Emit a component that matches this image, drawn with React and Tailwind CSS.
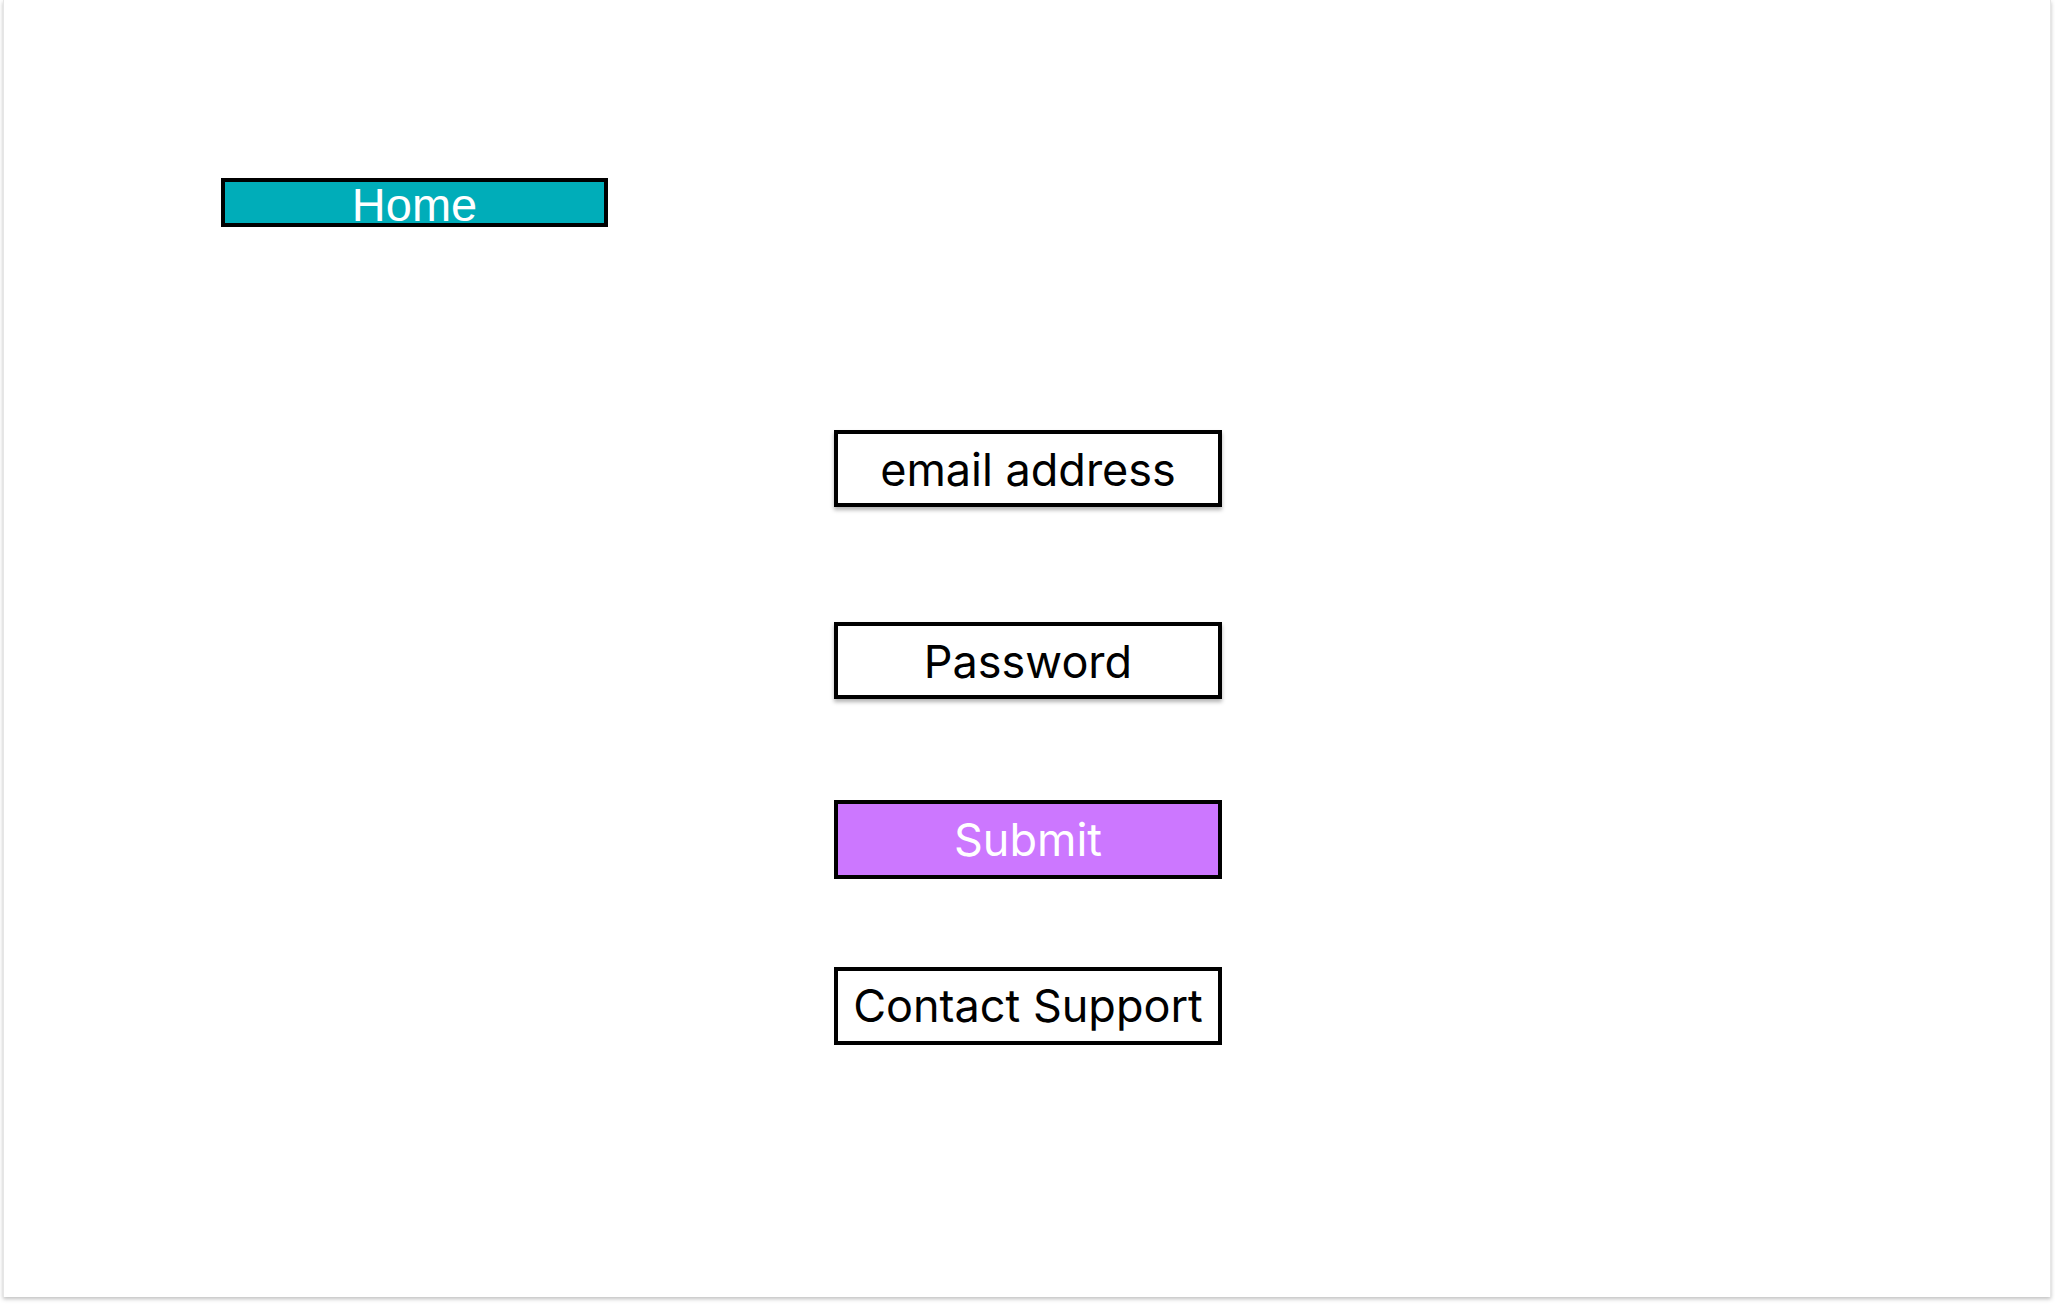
export default function App() {
  return (
    <div className="w-[2055px] h-[1305px] bg-white relative overflow-hidden">
      <div className="ml-[3px] w-[2048px] h-[1297px] bg-white shadow-[0_2px_4px_rgba(0,0,0,0.25)] border-l border-r border-[#e6e6e6] flex flex-col">
        <div className="mt-[178px] ml-[217px] w-[387px] h-[49px] bg-[#00adb9] border-[4px] border-black flex items-start justify-center">
          <span className="text-white text-[47px] leading-[40px] font-['Liberation_Sans',Arial,sans-serif] mt-[3px]">Home</span>
        </div>
        <div className="flex flex-col items-center font-['Inter',sans-serif] pl-[2px]">
          <div className="mt-[203px] w-[388px] h-[77px] border-[4px] border-black bg-white shadow-[0_3px_4px_rgba(0,0,0,0.3)] flex items-center justify-center text-[45px] text-black pt-[2px]">
            email address
          </div>
          <div className="mt-[115px] w-[388px] h-[77px] border-[4px] border-black bg-white shadow-[0_3px_4px_rgba(0,0,0,0.3)] flex items-center justify-center text-[45px] text-black pt-[2px]">
            Password
          </div>
          <div className="mt-[101px] w-[388px] h-[79px] border-[4px] border-black bg-[#cc77ff] flex items-center justify-center text-[45px] text-white">
            Submit
          </div>
          <div className="mt-[88px] w-[388px] h-[78px] border-[4px] border-black bg-white flex items-center justify-center text-[45px] text-black">
            Contact Support
          </div>
        </div>
      </div>
    </div>
  );
}
